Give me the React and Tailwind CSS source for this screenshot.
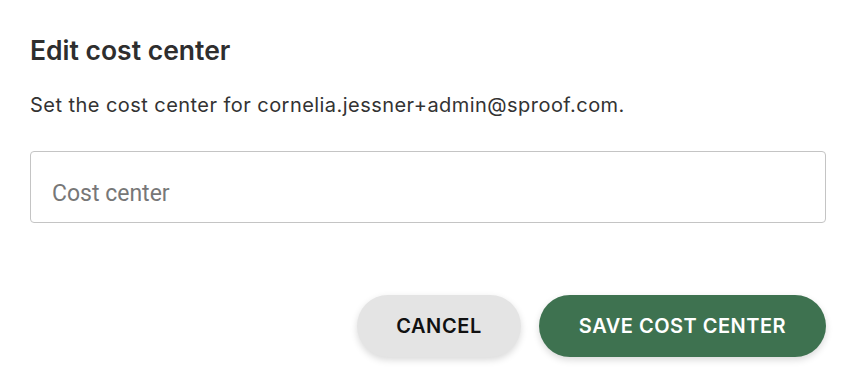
import React from 'react'

export default function App() {
  return (
    <div className="w-[856px] h-[388px] bg-white px-[30px] pt-[34px]" style={{ fontFamily: 'Inter, "Noto Sans", sans-serif' }}>
      <h2 className="text-[26.5px] leading-[32px] font-semibold text-[#2e2e2e]">Edit cost center</h2>
      <p className="mt-[25px] text-[20px] leading-[28px] tracking-[0.45px] text-[#333333]">
        Set the cost center for cornelia.jessner+admin@sproof.com.
      </p>

      <div className="mt-[32px] h-[72px] rounded-[4px] border border-[#c4c4c4] flex items-center px-[21px] pt-[14px]">
        <input
          placeholder="Cost center"
          className="w-full outline-none text-[23px] text-[#222] placeholder:text-[#777777]"
          style={{ fontFamily: 'Roboto, "Liberation Sans", sans-serif' }}
        />
      </div>

      <div className="mt-[72px] flex justify-end gap-[18px]">
        <button className="h-[62px] w-[164px] rounded-full bg-[#e4e4e4] text-[20px] font-semibold tracking-[0.6px] text-[#111111] shadow-[0_3px_7px_rgba(0,0,0,0.15)]">
          CANCEL
        </button>
        <button className="h-[62px] w-[287px] rounded-full bg-[#3e7250] text-[20px] font-semibold tracking-[0.5px] text-white shadow-[0_3px_7px_rgba(0,0,0,0.15)]">
          SAVE COST CENTER
        </button>
      </div>
    </div>
  )
}
